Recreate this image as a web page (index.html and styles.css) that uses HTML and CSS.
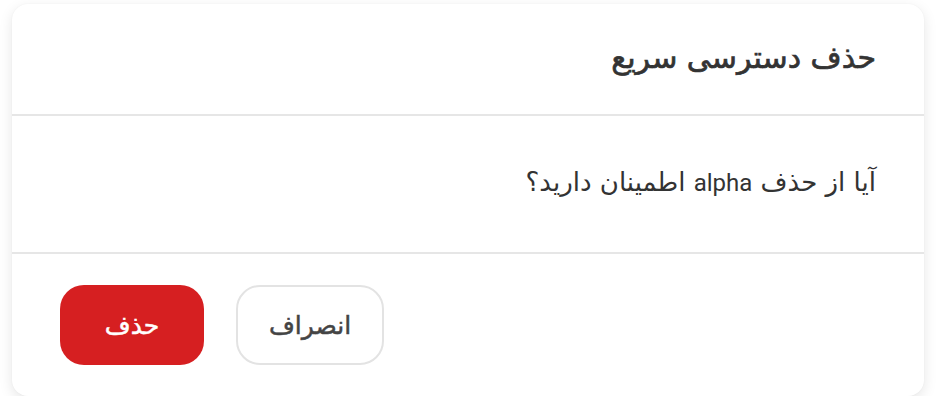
FILE: index.html
```html
<!DOCTYPE html>
<html lang="fa" dir="rtl">
<head>
<meta charset="utf-8">
<title>حذف دسترسی سریع</title>
<link rel="stylesheet" href="styles.css">
</head>
<body>
<div class="page">
  <div class="modal">
    <div class="modal-header">
      <h2 class="modal-title">حذف دسترسی سریع</h2>
    </div>
    <div class="modal-body">
      <p class="modal-text">آیا از حذف <span class="latin">alpha</span> اطمینان دارید؟</p>
    </div>
    <div class="modal-footer">
      <button class="btn btn-cancel">انصراف</button>
      <button class="btn btn-danger">حذف</button>
    </div>
  </div>
</div>
</body>
</html>
```

FILE: styles.css
```css
* { box-sizing: border-box; }
html, body { margin: 0; padding: 0; background: #ffffff; }
body {
  font-family: "DejaVu Sans", "Roboto", sans-serif;
  color: #333333;
}
.page {
  padding: 4px 12px 0 12px;
}
.modal {
  width: 912px;
  height: 392px;
  background: #ffffff;
  border-radius: 16px;
  box-shadow: 0 4px 14px rgba(0, 0, 0, 0.10), 0 0 2px rgba(0, 0, 0, 0.04);
  display: flex;
  flex-direction: column;
  overflow: hidden;
}
.modal-header {
  height: 112px;
  border-bottom: 2px solid #e6e6e6;
  display: flex;
  align-items: center;
  padding: 0 48px 4px;
}
.modal-title {
  margin: 0;
  font-size: 30px;
  font-weight: 400;
  -webkit-text-stroke: 0.7px #333333;
  color: #333333;
}
.modal-body {
  height: 138px;
  border-bottom: 2px solid #e6e6e6;
  display: flex;
  align-items: center;
  padding: 0 48px 5px;
}
.modal-text {
  margin: 0;
  font-size: 26px;
  color: #333333;
}
.latin {
  font-family: "Roboto", sans-serif;
  font-size: 24px;
}
.modal-footer {
  flex: 1;
  display: flex;
  align-items: center;
  justify-content: flex-end;
  gap: 32px;
  padding: 0 48px;
}
.btn {
  height: 80px;
  border-radius: 24px;
  font-family: inherit;
  font-size: 25px;
  font-weight: 400;
  cursor: pointer;
}
.btn-cancel {
  width: 148px;
  background: #ffffff;
  border: 2px solid #e3e3e3;
  color: #444444;
  -webkit-text-stroke: 0.5px #444444;
}
.btn-danger {
  width: 144px;
  background: #d61f21;
  border: none;
  color: #ffffff;
  -webkit-text-stroke: 0.5px #ffffff;
}
```
